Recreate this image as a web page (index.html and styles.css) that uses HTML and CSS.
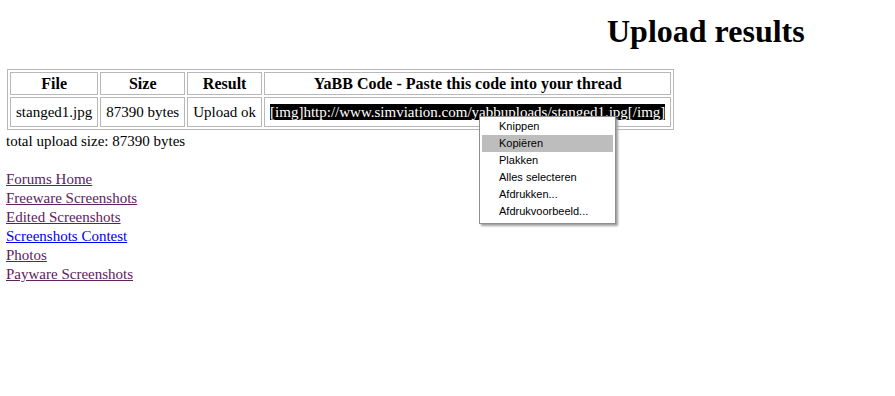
FILE: index.html
```
<html>
<head>
	<title>Upload results</title>
<link rel="stylesheet" href="styles.css">
</head>
<body>

	<h1 class="title">Upload results</h1>

	<table class="results">
		<tr>
			<th>File</th>
			<th>Size</th>
			<th>Result</th>
			<th>YaBB Code - Paste this code into your thread</th>
		</tr>
		<tr>
			<td>stanged1.jpg</td>
			<td>87390 bytes</td>
			<td>Upload ok</td>
			<td><span class="selected">[img]http://www.simviation.com/yabbuploads/stanged1.jpg[/img]</span></td>
		</tr>
	</table>

	<div class="total">total upload size: 87390 bytes</div>
	<br>

	<div class="links">
		<a class="visited" href="#">Forums Home</a><br>
		<a class="visited" href="#">Freeware Screenshots</a><br>
		<a class="visited" href="#">Edited Screenshots</a><br>
		<a href="#">Screenshots Contest</a><br>
		<a class="visited" href="#">Photos</a><br>
		<a class="visited" href="#">Payware Screenshots</a>
	</div>

	<ul class="menu">
		<li>Knippen</li>
		<li class="hover">Kopiëren</li>
		<li>Plakken</li>
		<li>Alles selecteren</li>
		<li>Afdrukken...</li>
		<li>Afdrukvoorbeeld...</li>
	</ul>

</body>
</html>
```
FILE: styles.css
```
body {
	margin: 0 6px;
	font-family: "Liberation Serif", "Times New Roman", serif;
	font-size: 15px;
	line-height: 19px;
	color: #000;
	background: #fff;
}

.title {
	font-size: 32px;
	line-height: 37px;
	margin: 13px 0 19px 0;
	padding-left: 601px;
}

.results {
	margin-left: 1px;
	border: 1px solid #b8b8b8;
	border-spacing: 2px;
	font-family: "Liberation Serif", "Times New Roman", serif;
	font-size: 15px;
	line-height: 18px;
}

.results th {
	border: 1px solid #b8b8b8;
	padding: 2px 5px 1px 5px;
	font-size: 16px;
}

.results td {
	border: 1px solid #b8b8b8;
	padding: 5px 5px 5px 5px;
	text-align: center;
}

.selected {
	background: #000;
	color: #fff;
}

.total {
	margin-top: 2px;
}

a {
	color: #0000ee;
}

a.visited {
	color: #602060;
}

.menu {
	position: absolute;
	left: 479px;
	top: 116px;
	margin: 0;
	padding: 1px 2px 3px 2px;
	width: 131px;
	list-style: none;
	background: #fff;
	border: 1px solid #8e8e8e;
	box-shadow: 2px 2px 2px #a0a0a0;
	font-family: "Liberation Sans", Tahoma, sans-serif;
	font-size: 11px;
	line-height: 17px;
}

.menu li {
	padding-left: 17px;
}

.menu li.hover {
	background: #bdbdbd;
}
```
